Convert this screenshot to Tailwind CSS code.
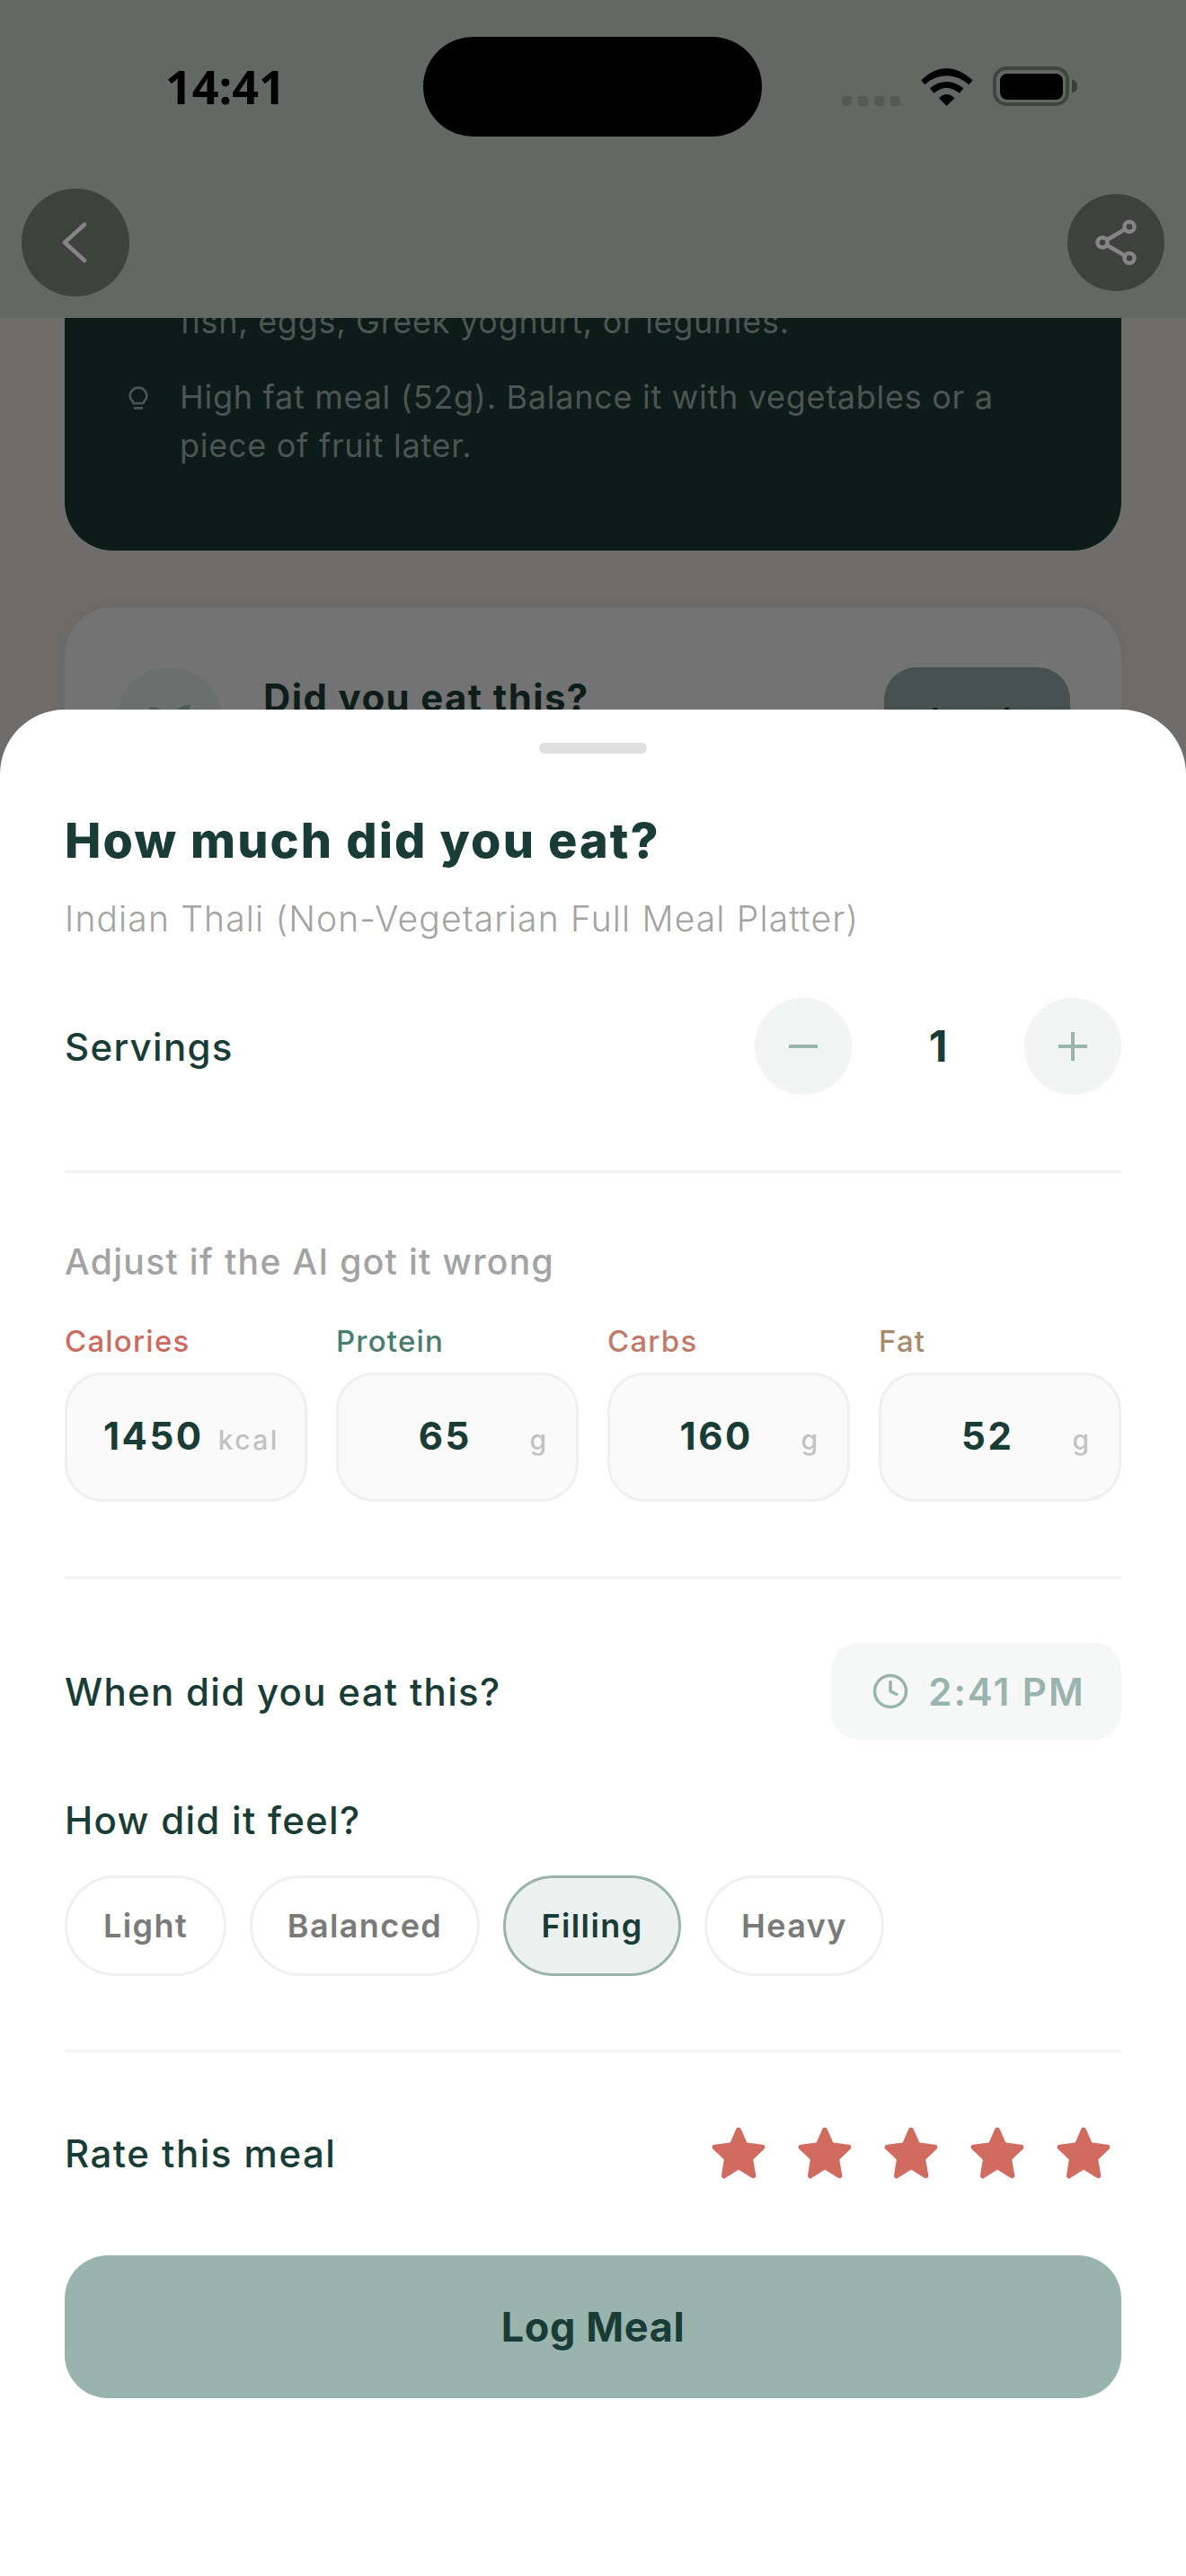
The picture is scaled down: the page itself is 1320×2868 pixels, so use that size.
<!doctype html>
<html lang="en">
<head>
<meta charset="utf-8">
<script src="https://cdn.jsdelivr.net/npm/@tailwindcss/browser@4"></script>
</head>
<body class="m-0">
<div class="relative w-[1320px] h-[2868px] overflow-hidden bg-[#6e6d6b] font-['Inter',sans-serif] text-[#1a3c36]">

  <!-- Dimmed page behind the sheet -->
  <header class="relative z-10 h-[354px] bg-[#636864]">
    <div class="flex items-start pt-[41px] pl-[184px]">
      <div class="w-[287px] h-[111px] font-['Open_Sans',sans-serif] font-bold text-[52px] leading-[48px] pt-[31px] text-black">14:41</div>
      <div class="w-[377px] h-[111px] rounded-full bg-black"></div>
      <div class="ml-[89px] flex items-end h-[77px]">
        <div class="flex gap-[7px]">
          <span class="w-[11px] h-[11px] rounded-[3px] bg-[#555855]"></span>
          <span class="w-[11px] h-[11px] rounded-[3px] bg-[#555855]"></span>
          <span class="w-[11px] h-[11px] rounded-[3px] bg-[#555855]"></span>
          <span class="w-[11px] h-[11px] rounded-[3px] bg-[#555855]"></span>
        </div>
        <svg class="ml-[23px]" width="58" height="42" viewBox="375 105 173 126" fill="#000">
          <path d="M375 145Q415 105 460 105Q505 105 547 145L535 160Q500 130 460 130Q420 130 387 160Z"/>
          <path d="M404 172Q430 150 460 150Q490 150 517 172L503 188Q480 170 460 170Q440 170 418 188Z"/>
          <path d="M435 205Q447 192 460 192Q474 192 487 205L460 231Z"/>
        </svg>
        <svg class="ml-[22px]" width="94" height="44" viewBox="0 0 94 44">
          <rect x="2" y="2" width="81" height="40" rx="13" fill="none" stroke="#414340" stroke-width="4"/>
          <rect x="8" y="8" width="70" height="29" rx="8" fill="#000"/>
          <path d="M88 14.500Q94 16 94 22Q94 28 88 29.500Z" fill="#3a3c3a"/>
        </svg>
      </div>
    </div>
    <div class="flex items-center justify-between px-[24px] mt-[58px]">
      <div class="w-[120px] h-[120px] rounded-full bg-[#3f413e] flex items-center justify-center">
        <svg width="30" height="46" viewBox="0 0 30 46" fill="none" stroke="#858585" stroke-width="4.500" stroke-linecap="round" stroke-linejoin="round"><path d="M25 3 3 23 25 43"/></svg>
      </div>
      <div class="w-[108px] h-[108px] rounded-full bg-[#3f413e] flex items-center justify-center">
        <svg width="48" height="52" viewBox="0 0 48 52" fill="none" stroke="#858585" stroke-width="4.500"><path d="M9 26 38 9M9 26 38 43"/><circle cx="9" cy="26" r="5.500" fill="#3f413e"/><circle cx="39" cy="8.500" r="5.500" fill="#3f413e"/><circle cx="39" cy="43.500" r="5.500" fill="#3f413e"/></svg>
      </div>
    </div>
  </header>

  <main class="px-[72px]">
    <section class="h-[259px] rounded-b-[54px] bg-[#0d1c19] overflow-hidden text-[#4c5552] text-[36px] leading-[54px] tracking-[0.72px]">
      <p class="pl-[128px] -mt-[23px]">fish, eggs, Greek yoghurt, or legumes.</p>
      <div class="flex pl-[66px] pr-[60px] mt-[30px]">
        <svg class="mt-[12px] shrink-0" width="32" height="36" viewBox="0 0 24 27" fill="none" stroke="#4c5552" stroke-width="2" stroke-linecap="round" stroke-linejoin="round"><path d="M16 16.500c.2-1 .7-1.700 1.500-2.500 1-.9 1.500-2.200 1.500-3.500A7 7 0 0 0 5 10.500c0 1 .2 2.200 1.500 3.500.7.700 1.300 1.500 1.500 2.500"/><path d="M8 16.500h8M9 20.500h6"/></svg>
        <p class="ml-[30px]">High fat meal (52g). Balance it with vegetables or a piece of fruit later.</p>
      </div>
    </section>
    <section class="mt-[63px] h-[300px] rounded-[54px] bg-[#737373] shadow-[0_0_24px_rgba(0,0,0,0.05)] flex items-start pt-[67px] pl-[58px] pr-[57px]">
      <div class="w-[117px] h-[117px] rounded-full bg-[#6b6f6d] flex items-center justify-center">
        <svg width="60" height="60" viewBox="0 0 24 24" fill="#4c5a56"><path d="M3 6c5 0 8 3 9 8 1-5 4-9 9-9 0 8-3 14-9 14S3 13 3 6z"/></svg>
      </div>
      <div class="ml-[46px] mt-[9px] font-bold text-[42px] leading-[50px] tracking-[1.35px] text-[#0e1d1a]">Did you eat this?</div>
      <div class="ml-auto w-[207px] h-[120px] rounded-[36px] bg-[#475250] text-center text-[39px] font-semibold leading-[120px] text-[#0e1d1a]">Log it</div>
    </section>
  </main>

  <!-- Bottom sheet -->
  <div class="absolute left-0 right-0 top-[790px] bottom-0 z-20 bg-white rounded-t-[72px] px-[72px] pt-[37px]">
    <div class="mx-auto w-[120px] h-[12px] rounded-full bg-[#e0e0e0]"></div>
    <h1 class="mt-[62px] font-extrabold text-[54px] leading-[70px] tracking-[2.1px]">How much did you eat?</h1>
    <p class="mt-[27px] text-[39px] leading-[50px] font-[350] tracking-[1.15px] text-[#a3a3a3]">Indian Thali (Non-Vegetarian Full Meal Platter)</p>

    <div class="mt-[63px] flex items-center h-[108px]">
      <span class="text-[42px] font-medium tracking-[1.3px]">Servings</span>
      <button class="ml-auto w-[108px] h-[108px] rounded-full bg-[#f3f5f4] flex items-center justify-center">
        <svg width="36" height="36" viewBox="0 0 36 36" fill="none" stroke="#99b3ad" stroke-width="4"><path d="M2 18h32"/></svg>
      </button>
      <span class="w-[192px] text-center text-[48px] font-bold">1</span>
      <button class="w-[108px] h-[108px] rounded-full bg-[#f3f5f4] flex items-center justify-center">
        <svg width="36" height="36" viewBox="0 0 36 36" fill="none" stroke="#99b3ad" stroke-width="4"><path d="M2 18h32M18 2v32"/></svg>
      </button>
    </div>

    <div class="mt-[84px] h-[3px] bg-[#f3f3f3]"></div>

    <p class="mt-[74px] text-[39px] leading-[50px] font-medium tracking-[1.35px] text-[#a3a3a3]">Adjust if the AI got it wrong</p>

    <div class="mt-[42px] grid grid-cols-4 gap-[32px]">
      <div>
        <div class="text-[33px] leading-[42px] font-medium tracking-[1.2px] text-[#cc6b60]">Calories</div>
        <div class="mt-[14px] h-[144px] rounded-[42px] bg-[#fafafa] border-[3px] border-[#f0f0f0] flex items-baseline pl-[40px] pr-[33px] pt-[41px]">
          <span class="flex-1 text-center text-[42px] leading-[54px] font-bold tracking-[2.5px]">1450</span>
          <span class="ml-[16px] text-[30px] font-medium tracking-[2.4px] text-[#c2c2c2]">kcal</span>
        </div>
      </div>
      <div>
        <div class="text-[33px] leading-[42px] font-medium tracking-[1.2px] text-[#4a7c70]">Protein</div>
        <div class="mt-[14px] h-[144px] rounded-[42px] bg-[#fafafa] border-[3px] border-[#f0f0f0] flex items-baseline pl-[40px] pr-[33px] pt-[41px]">
          <span class="flex-1 text-center text-[42px] leading-[54px] font-bold tracking-[2.5px]">65</span>
          <span class="ml-[16px] text-[30px] font-medium text-[#c2c2c2]">g</span>
        </div>
      </div>
      <div>
        <div class="text-[33px] leading-[42px] font-medium tracking-[1.2px] text-[#c27a68]">Carbs</div>
        <div class="mt-[14px] h-[144px] rounded-[42px] bg-[#fafafa] border-[3px] border-[#f0f0f0] flex items-baseline pl-[40px] pr-[33px] pt-[41px]">
          <span class="flex-1 text-center text-[42px] leading-[54px] font-bold tracking-[2.5px]">160</span>
          <span class="ml-[16px] text-[30px] font-medium text-[#c2c2c2]">g</span>
        </div>
      </div>
      <div>
        <div class="text-[33px] leading-[42px] font-medium tracking-[1.2px] text-[#a68b6c]">Fat</div>
        <div class="mt-[14px] h-[144px] rounded-[42px] bg-[#fafafa] border-[3px] border-[#f0f0f0] flex items-baseline pl-[40px] pr-[33px] pt-[41px]">
          <span class="flex-1 text-center text-[42px] leading-[54px] font-bold tracking-[2.5px]">52</span>
          <span class="ml-[16px] text-[30px] font-medium text-[#c2c2c2]">g</span>
        </div>
      </div>
    </div>

    <div class="mt-[83px] h-[3px] bg-[#f3f3f3]"></div>

    <div class="mt-[71px] flex items-center justify-between">
      <span class="text-[42px] font-medium tracking-[1.3px]">When did you eat this?</span>
      <div class="w-[323px] h-[108px] rounded-[30px] bg-[#f6f8f7] flex items-center justify-center gap-[21px] pl-[5px] text-[#99b3ad]">
        <svg width="42" height="42" viewBox="0 0 24 24" fill="none" stroke="#99b3ad" stroke-width="2" stroke-linecap="round" stroke-linejoin="round"><circle cx="12" cy="12" r="10"/><path d="M12 6v6l4 2"/></svg>
        <span class="text-[42px] font-semibold tracking-[2px]">2:41 PM</span>
      </div>
    </div>

    <p class="mt-[65px] text-[42px] leading-[50px] font-medium tracking-[1.3px]">How did it feel?</p>

    <div class="mt-[36px] flex gap-[26px]">
      <span class="h-[112px] w-[180px] rounded-full border-[3px] border-[#f0f0f0] flex items-center justify-center text-[36px] font-semibold tracking-[1.4px] text-[#7a7a7a]">Light</span>
      <span class="h-[112px] w-[256px] rounded-full border-[3px] border-[#f0f0f0] flex items-center justify-center text-[36px] font-semibold tracking-[1.4px] text-[#7a7a7a]">Balanced</span>
      <span class="h-[112px] w-[198px] rounded-full border-[3px] border-[#99b3ad] bg-[#ecf0ee] flex items-center justify-center text-[36px] font-semibold tracking-[1.4px] text-[#1a3c36]">Filling</span>
      <span class="h-[112px] w-[200px] rounded-full border-[3px] border-[#f0f0f0] flex items-center justify-center text-[36px] font-semibold tracking-[1.4px] text-[#7a7a7a]">Heavy</span>
    </div>

    <div class="mt-[82px] h-[3px] bg-[#f3f3f3]"></div>

    <div class="mt-[71px] flex items-center justify-between">
      <span class="text-[42px] font-medium tracking-[1.5px]">Rate this meal</span>
      <div class="flex gap-[12px]">
        <svg class="m-[10px]" width="64" height="62" viewBox="30 75 192 186" fill="#d26b5f" stroke="#d26b5f" stroke-width="18" stroke-linejoin="round"><path d="M126 92 148 142 205 149 165 187 175 244 126 213 78 244 87 187 47 149 104 142Z"/></svg>
        <svg class="m-[10px]" width="64" height="62" viewBox="30 75 192 186" fill="#d26b5f" stroke="#d26b5f" stroke-width="18" stroke-linejoin="round"><path d="M126 92 148 142 205 149 165 187 175 244 126 213 78 244 87 187 47 149 104 142Z"/></svg>
        <svg class="m-[10px]" width="64" height="62" viewBox="30 75 192 186" fill="#d26b5f" stroke="#d26b5f" stroke-width="18" stroke-linejoin="round"><path d="M126 92 148 142 205 149 165 187 175 244 126 213 78 244 87 187 47 149 104 142Z"/></svg>
        <svg class="m-[10px]" width="64" height="62" viewBox="30 75 192 186" fill="#d26b5f" stroke="#d26b5f" stroke-width="18" stroke-linejoin="round"><path d="M126 92 148 142 205 149 165 187 175 244 126 213 78 244 87 187 47 149 104 142Z"/></svg>
        <svg class="m-[10px]" width="64" height="62" viewBox="30 75 192 186" fill="#d26b5f" stroke="#d26b5f" stroke-width="18" stroke-linejoin="round"><path d="M126 92 148 142 205 149 165 187 175 244 126 213 78 244 87 187 47 149 104 142Z"/></svg>
      </div>
    </div>

    <button class="mt-[73px] w-full h-[159px] rounded-[48px] bg-[#99b3ad] text-[45px] font-bold tracking-[0.6px] text-[#1a3c36]">Log Meal</button>
  </div>
</div>
</body>
</html>
